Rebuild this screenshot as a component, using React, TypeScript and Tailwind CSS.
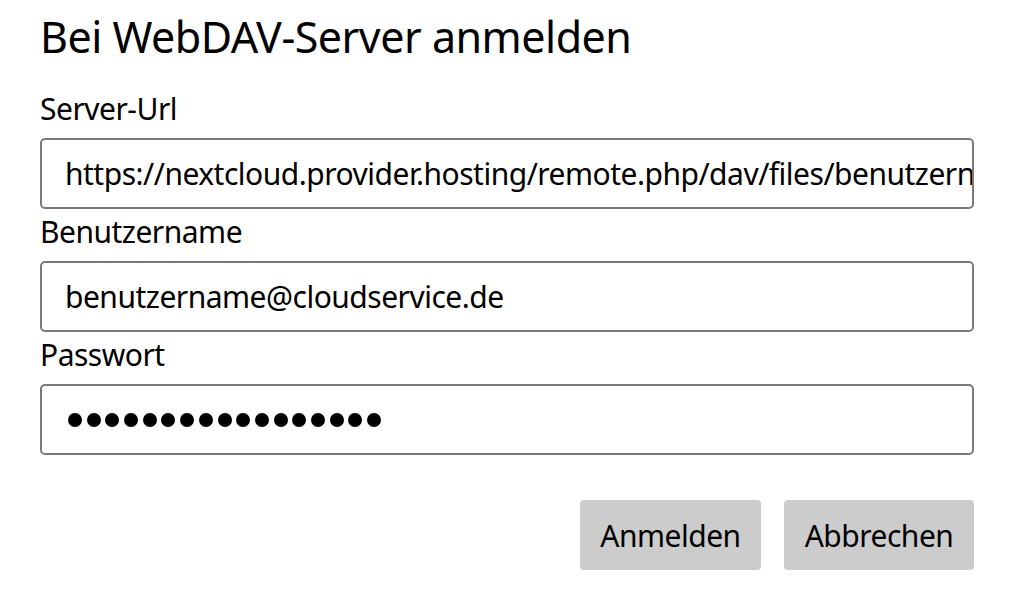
import React from 'react';

const fields = [
  { label: 'Server-Url', value: 'https://nextcloud.provider.hosting/remote.php/dav/files/benutzername/' },
  { label: 'Benutzername', value: 'benutzername@cloudservice.de' },
];

const Field: React.FC<{ label: string; children: React.ReactNode }> = ({ label, children }) => (
  <div className="pt-[3px]">
    <div className="text-[30px] tracking-[-0.5px] leading-[40px] h-[40px] mb-[9px] text-black">{label}</div>
    <div className="h-[71px] border-2 border-[#7a7a7a] rounded-[5px] bg-white flex items-center overflow-hidden">
      {children}
    </div>
  </div>
);

const App: React.FC = () => {
  return (
    <div className="w-full h-[590px] overflow-hidden bg-white px-[40px] font-['Noto_Sans',sans-serif] text-black">
      {/* Title */}
      <h1 className="pt-[7px] text-[43px] tracking-[-0.5px] leading-[60px] h-[67px] font-normal">Bei WebDAV-Server anmelden</h1>

      <div className="mt-[19px] w-[934px]">
        {fields.map((f) => (
          <Field key={f.label} label={f.label}>
            <input
              readOnly
              value={f.value}
              className="w-full h-full pl-[23px] pr-0 text-[30px] tracking-[-0.5px] bg-transparent outline-none text-black"
            />
          </Field>
        ))}
        <Field label="Passwort">
          <div className="pl-[26px] flex gap-[4.7px]" aria-label="Passwort">
            {Array.from({ length: 17 }).map((_, i) => (
              <span key={i} className="w-[14px] h-[14px] rounded-full bg-black" />
            ))}
          </div>
        </Field>

        {/* Buttons */}
        <div className="mt-[45px] flex justify-end gap-[23px]">
          <button className="w-[181px] h-[70px] rounded-[4px] bg-[#cccccc] text-[30px] tracking-[-0.5px] text-black">Anmelden</button>
          <button className="w-[190px] h-[70px] rounded-[4px] bg-[#cccccc] text-[30px] tracking-[-0.5px] text-black">Abbrechen</button>
        </div>
      </div>
    </div>
  );
};

export default App;
